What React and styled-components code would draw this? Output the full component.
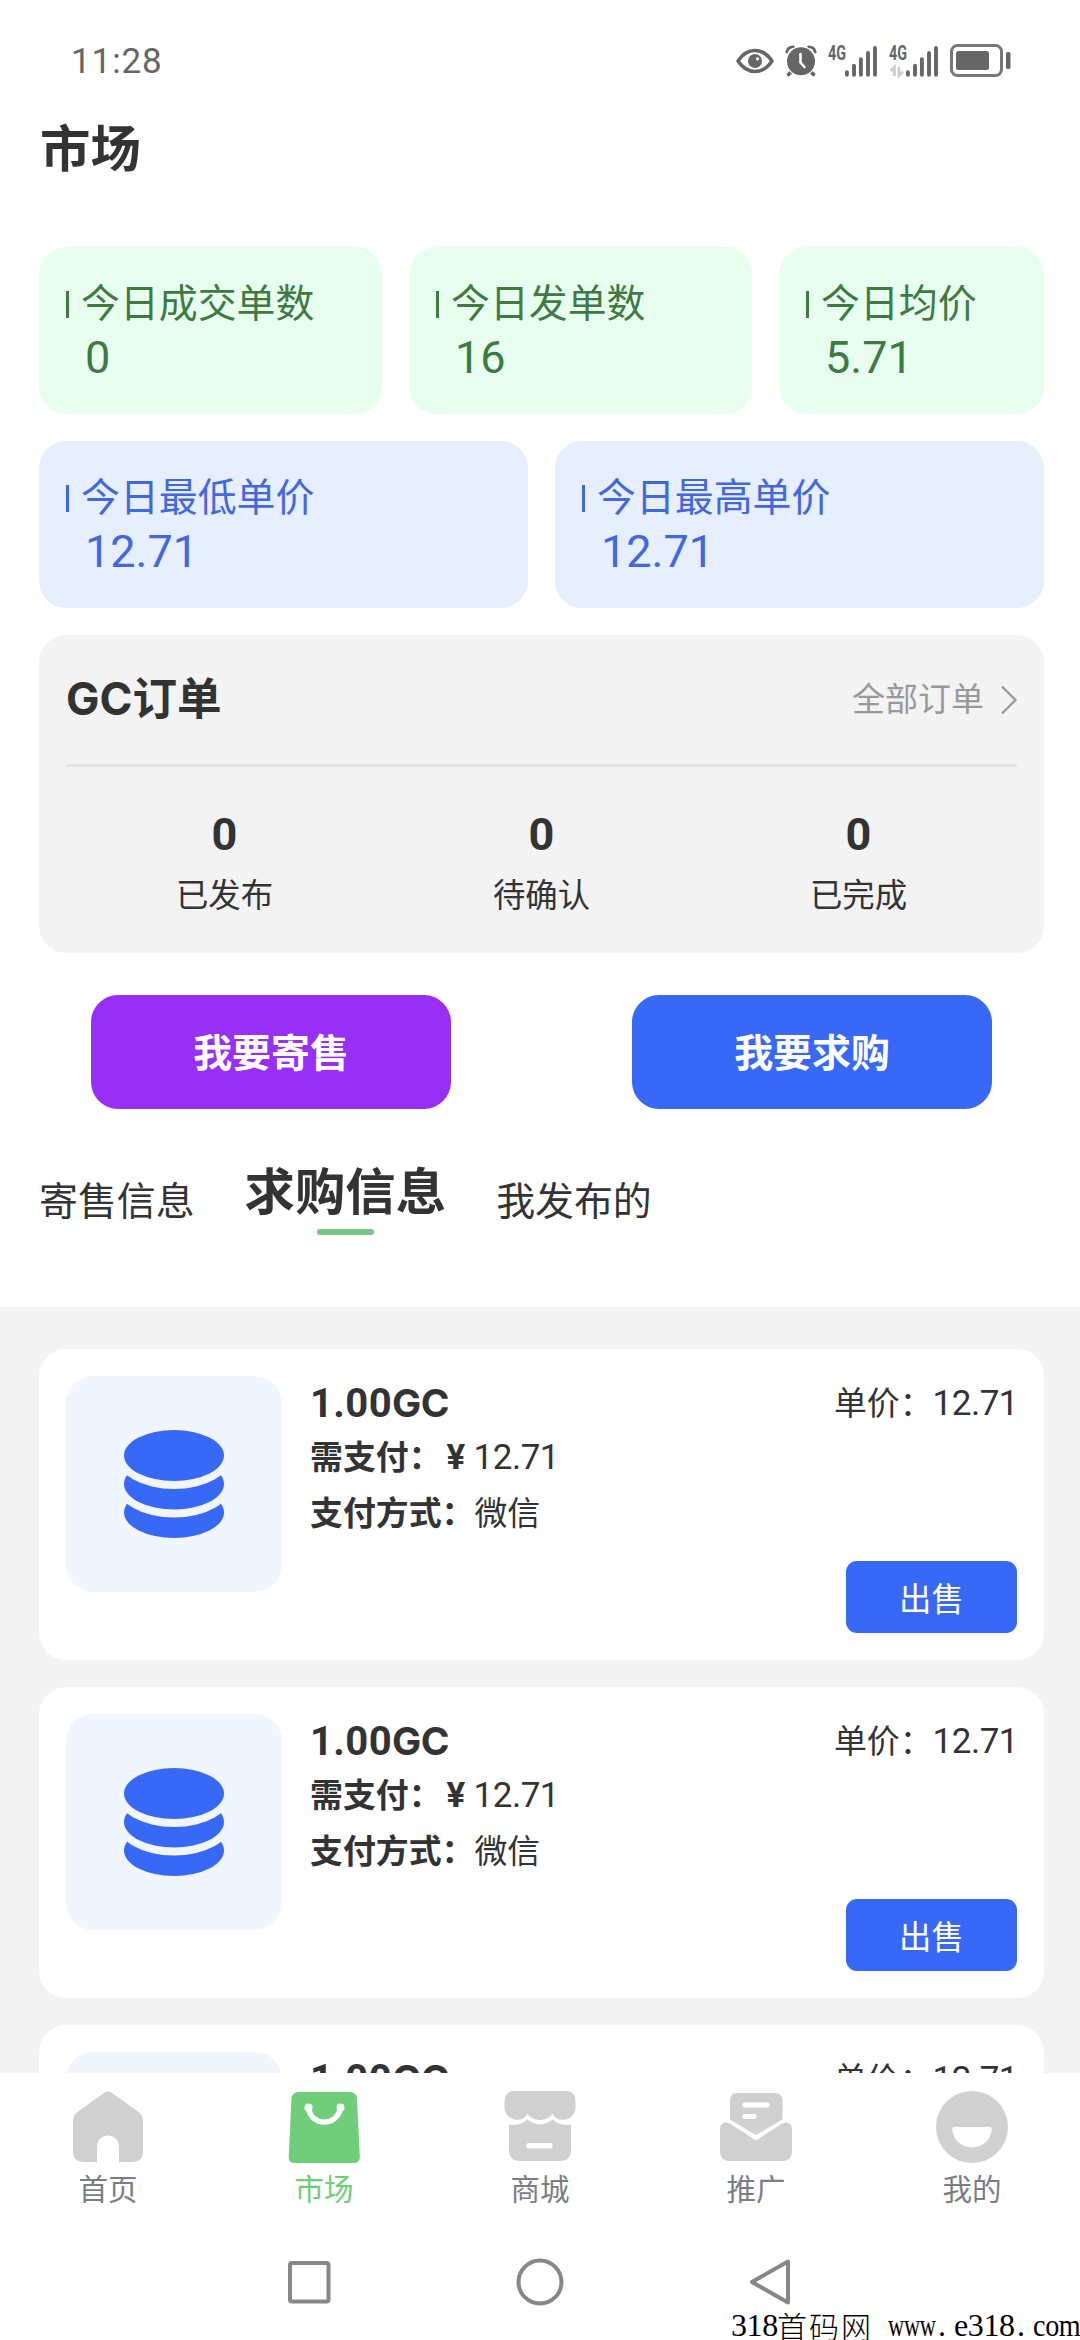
import React from 'react'
import styled, { createGlobalStyle } from 'styled-components'

const GlobalStyle = createGlobalStyle`
  * {
    box-sizing: border-box;
  }
  body {
    margin: 0;
    background: #fff;
    font-family: Roboto, "Noto Sans CJK SC", sans-serif;
    color: #333;
  }
`

const orderStates = [
  { count: 0, label: '已发布' },
  { count: 0, label: '待确认' },
  { count: 0, label: '已完成' },
]

const offers = [
  { id: 1, amount: '1.00', pay: '12.71', method: '微信', price: '12.71' },
  { id: 2, amount: '1.00', pay: '12.71', method: '微信', price: '12.71' },
  { id: 3, amount: '1.00', pay: '12.71', method: '微信', price: '12.71' },
]

/* ---------- icons ---------- */

const EyeIcon = () => (
  <svg width="38" height="26" viewBox="0 0 38 26">
    <path d="M2 13C7 5.500 12.500 2.500 19 2.500S31 5.500 36 13C31 20.500 25.500 23.500 19 23.500S7 20.500 2 13Z" fill="none" stroke="#666" strokeWidth="3.600" strokeLinejoin="round" />
    <circle cx="19" cy="13" r="7" fill="#666" />
    <circle cx="21.500" cy="10.800" r="1.600" fill="#fff" />
  </svg>
)

const AlarmIcon = () => (
  <svg width="32" height="32" viewBox="0 0 32 32">
    <path d="M7 26 3.500 29.500M25 26l3.500 3.500" stroke="#666" strokeWidth="3.600" strokeLinecap="round" />
    <path d="M1.800 7C2.500 3.500 5 1.700 8.500 1.800M30.200 7C29.500 3.500 27 1.700 23.500 1.800" fill="none" stroke="#666" strokeWidth="2.800" strokeLinecap="round" />
    <circle cx="16" cy="16.300" r="15.300" fill="#fff" />
    <circle cx="16" cy="16.300" r="14" fill="#666" />
    <path d="M15.500 9v8.500l4 4.500" fill="none" stroke="#fff" strokeWidth="2.600" strokeLinecap="round" />
  </svg>
)

const SignalIcon = ({ data }) => (
  <SignalSvg width="50" height="32" viewBox="0 0 50 32">
    <text x="0" y="15" fontFamily="Roboto" fontWeight="700" fontSize="20" fill="#666" textLength="18" lengthAdjust="spacingAndGlyphs">4G</text>
    {data && (
      <path d="M5.500 31V22L1.500 26M10 21.500V30.500L14 26.500" fill="none" stroke="#ccc" strokeWidth="2.600" />
    )}
    <path d="M18.900 27.200v2.600M26 20.800v9M32.900 14.200v15.600M40 8v21.800M47 3v26.800" stroke="#666" strokeWidth="3.900" strokeLinecap="round" />
  </SignalSvg>
)

const BatteryIcon = () => (
  <svg width="61" height="34" viewBox="0 0 61 34">
    <rect x="1.500" y="1.500" width="50" height="30" rx="6" fill="none" stroke="#777" strokeWidth="3" />
    <rect x="6" y="7" width="33" height="19" rx="2.500" fill="#666" />
    <rect x="56" y="8" width="4.500" height="17" rx="1.800" fill="#666" />
  </svg>
)

const ChevronIcon = () => (
  <svg width="18" height="30" viewBox="0 0 18 30">
    <path d="M2 1.500 15.500 15 2 28.500" fill="none" stroke="#999" strokeWidth="2.200" />
  </svg>
)

const CoinsIcon = () => (
  <svg width="100" height="108" viewBox="0 0 100 108">
    <ellipse cx="50" cy="82.500" rx="50" ry="25.500" fill="#3868f6" />
    <ellipse cx="50" cy="54" rx="58" ry="33.500" fill="#f1f6fe" />
    <ellipse cx="50" cy="54" rx="50" ry="25.500" fill="#3868f6" />
    <ellipse cx="50" cy="25.500" rx="58" ry="33.500" fill="#f1f6fe" />
    <ellipse cx="50" cy="25.500" rx="50" ry="25.500" fill="#3868f6" />
  </svg>
)

const HomeIcon = () => (
  <svg width="74" height="74" viewBox="0 0 74 74">
    <path d="M32.500 3.200Q37 0 41.500 3.200L67.500 22Q72 25.500 72 31V61Q72 72 61 72H48V56.500A11 11 0 0 0 26 56.500V72H13Q2 72 2 61V31Q2 25.500 6.500 22Z" fill="#d0d0d0" />
  </svg>
)

const BagIcon = () => (
  <svg width="74" height="74" viewBox="0 0 74 74">
    <path d="M12 2H63Q69.500 2 70 8.500L72.800 67Q72.800 73 67 73H7.500Q1.500 73 1.700 67L4.500 8.500Q5 2 12 2Z" fill="#70ce7a" />
    <path d="M21.500 17.500C24 37 50.500 37 53.500 17.500" fill="none" stroke="#fff" strokeWidth="5.400" />
    <circle cx="21.500" cy="17.500" r="4" fill="#fff" />
    <circle cx="53.500" cy="17.500" r="4" fill="#fff" />
  </svg>
)

const StoreIcon = () => (
  <svg width="74" height="74" viewBox="0 0 74 74">
    <path d="M11 1H63Q72.500 1 72.500 12V17C72.500 31 54.500 34 49.500 23.500C45 32 29 32 24.500 23.500C19.500 34 1.500 31 1.500 17V12Q1.500 1 11 1Z" fill="#d0d0d0" />
    <path d="M6 34.500Q17 36.500 24.500 29.500Q37 39.500 49.500 29.500Q57 36.500 68 34.500V60Q68 71 57 71H17Q6 71 6 60Z" fill="#d0d0d0" />
    <rect x="23.500" y="53" width="26" height="5.500" rx="2" fill="#fff" />
  </svg>
)

const PromoIcon = () => (
  <svg width="74" height="74" viewBox="0 0 74 74">
    <path d="M18 3H56Q63.500 3 63.500 11V29.500L37 45L11 29.500V11Q11 3 18 3Z" fill="#d0d0d0" />
    <path d="M1 40C1 32 7 31 11.500 34L37 50.500L62.500 34C67 31 73 32 73 40V62Q73 71 63 71H11Q1 71 1 62Z" fill="#d0d0d0" />
    <rect x="23.500" y="12.500" width="27" height="5" rx="1.800" fill="#fff" />
    <rect x="23.500" y="24" width="14" height="5" rx="1.800" fill="#fff" />
  </svg>
)

const MineIcon = () => (
  <svg width="74" height="74" viewBox="0 0 74 74">
    <circle cx="37" cy="37" r="36" fill="#d0d0d0" />
    <path d="M19 37H55Q56.700 37 56.700 39A19.700 18.500 0 0 1 17.300 39Q17.300 37 19 37Z" fill="#fff" />
  </svg>
)

const navItems = [
  { label: '首页', Icon: HomeIcon },
  { label: '市场', Icon: BagIcon, active: true },
  { label: '商城', Icon: StoreIcon },
  { label: '推广', Icon: PromoIcon },
  { label: '我的', Icon: MineIcon },
]

/* ---------- sections ---------- */

const StatCard = ({ tone, label, value }) => (
  <Stat $tone={tone}>
    <StatLabel>{label}</StatLabel>
    <StatValue>{value}</StatValue>
  </Stat>
)

const OfferCard = ({ offer }) => (
  <Offer>
    <Thumb><CoinsIcon /></Thumb>
    <OfferInfo>
      <Amount>{offer.amount}<Unit>GC</Unit></Amount>
      <InfoLine><b>需支付：</b><Yen>¥</Yen><Num>{offer.pay}</Num></InfoLine>
      <InfoLine><b>支付方式：</b>{offer.method}</InfoLine>
    </OfferInfo>
    <OfferSide>
      <Price>单价：<Num>{offer.price}</Num></Price>
      <SellButton>出售</SellButton>
    </OfferSide>
  </Offer>
)

const App = () => {
  return (
    <Screen>
      <GlobalStyle />
      <StatusBar>
        <Clock>11:28</Clock>
        <StatusIcons>
          <EyeIcon />
          <AlarmIcon />
          <SignalIcon />
          <SignalIcon data />
          <BatteryIcon />
        </StatusIcons>
      </StatusBar>

      <Title>市场</Title>

      <Content>
        <StatRow $columns="343px 343px 1fr">
          <StatCard tone="green" label="今日成交单数" value="0" />
          <StatCard tone="green" label="今日发单数" value="16" />
          <StatCard tone="green" label="今日均价" value="5.71" />
        </StatRow>
        <StatRow $columns="1fr 1fr">
          <StatCard tone="blue" label="今日最低单价" value="12.71" />
          <StatCard tone="blue" label="今日最高单价" value="12.71" />
        </StatRow>

        <Orders>
          <OrdersHead>
            <OrdersTitle><Unit>GC</Unit>订单</OrdersTitle>
            <AllOrders>全部订单<ChevronIcon /></AllOrders>
          </OrdersHead>
          <OrderStates>
            {orderStates.map((item) => (
              <OrderState key={item.label}>
                <strong>{item.count}</strong>
                <span>{item.label}</span>
              </OrderState>
            ))}
          </OrderStates>
        </Orders>

        <Actions>
          <ActionButton $bg="#982ff6">我要寄售</ActionButton>
          <ActionButton $bg="#3868f6">我要求购</ActionButton>
        </Actions>

        <Tabs>
          <Tab>寄售信息</Tab>
          <Tab $active>求购信息</Tab>
          <Tab>我发布的</Tab>
        </Tabs>
      </Content>

      <OfferList>
        {offers.map((offer) => <OfferCard key={offer.id} offer={offer} />)}
      </OfferList>

      <TabBar>
        {navItems.map(({ label, Icon, active }) => (
          <TabBarItem key={label} $active={active}>
            <Icon />
            <span>{label}</span>
          </TabBarItem>
        ))}
      </TabBar>

      <SystemNav>
        <svg width="50" height="50" viewBox="0 0 50 50">
          <rect x="6" y="6" width="38.500" height="38.500" rx="2" fill="none" stroke="#878787" strokeWidth="4" />
        </svg>
        <svg width="50" height="50" viewBox="0 0 50 50">
          <circle cx="25" cy="25" r="21.500" fill="none" stroke="#878787" strokeWidth="4" />
        </svg>
        <svg width="50" height="50" viewBox="0 0 50 50">
          <path d="M42 4.500V45.500L6 25Z" fill="none" stroke="#878787" strokeWidth="4" strokeLinejoin="round" />
        </svg>
      </SystemNav>

      <Watermark>
        <Mark $w={46}>318</Mark>
        <MarkHan>首码网</MarkHan>
        <Mark $w={50} $squeeze={0.7}>www</Mark>
        <Mark $w={16}>.</Mark>
        <Mark $w={63}>e318</Mark>
        <Mark $w={16}>.</Mark>
        <Mark $w={47} $squeeze={0.88}>com</Mark>
      </Watermark>
    </Screen>
  )
}

const Screen = styled.div`
  position: relative;
  display: flex;
  flex-direction: column;
  width: 1080px;
  height: 2340px;
  overflow: hidden;
  background: #fff;
`

const StatusBar = styled.header`
  display: flex;
  justify-content: space-between;
  align-items: center;
  height: 82px;
  padding: 40px 69px 0 71px;
`

const Clock = styled.span`
  padding-top: 2px;
  font-size: 35px;
  line-height: 42px;
  letter-spacing: 0.9px;
  color: #666;
`

const StatusIcons = styled.div`
  display: flex;
  align-items: center;

  svg {
    flex: none;
    margin-left: 11px;
  }
  svg:first-child {
    margin-left: 0;
  }
`

const SignalSvg = styled.svg`
  overflow: visible;
`

const Title = styled.h1`
  height: 165px;
  margin: 0;
  padding: 38px 39px 0 40px;
  font-size: 50.4px;
  line-height: 60px;
`

const Content = styled.main`
  display: flex;
  flex-direction: column;
  flex: none;
  height: 1060px;
  padding: 0 36px 0 39px;
`

const StatRow = styled.div`
  display: grid;
  grid-template-columns: ${(p) => p.$columns};
  gap: 27px;
  margin-bottom: 27px;
`

const tones = {
  green: { bg: '#e8ffef', text: '#3f7a43' },
  blue: { bg: '#e7eefe', text: '#4168e0' },
}

const Stat = styled.div`
  height: 167px;
  padding: 34px 0 0 27px;
  border-radius: 27px;
  background: ${(p) => tones[p.$tone].bg};
  color: ${(p) => tones[p.$tone].text};
`

const StatLabel = styled.div`
  display: flex;
  align-items: center;
  font-size: 38.9px;
  line-height: 46px;

  &::before {
    content: '';
    width: 3px;
    height: 27px;
    margin-right: 12px;
    background: currentColor;
  }
`

const StatValue = styled.div`
  padding: 6px 0 0 19px;
  font-size: 45px;
  line-height: 50px;
`

const Orders = styled.section`
  height: 318px;
  padding: 0 27px;
  border-radius: 27px;
  background: #f3f3f3;
`

const OrdersHead = styled.div`
  display: flex;
  justify-content: space-between;
  align-items: center;
  height: 132px;
  border-bottom: 3px solid #e3e3e3;
`

const Unit = styled.span`
  font-family: Inter, sans-serif;
`

const OrdersTitle = styled.h2`
  margin: 0;
  font-size: 44.6px;
  line-height: 56px;
`

const AllOrders = styled.div`
  display: flex;
  align-items: center;
  gap: 16px;
  margin-right: -1px;
  font-size: 33px;
  line-height: 44px;
  color: #999;
`

const OrderStates = styled.div`
  display: grid;
  grid-template-columns: repeat(3, 1fr);
  padding-top: 43px;
`

const OrderState = styled.div`
  display: flex;
  flex-direction: column;
  align-items: center;

  strong {
    font-size: 45px;
    line-height: 50px;
  }
  span {
    margin-top: 14px;
    font-size: 32.4px;
    line-height: 44px;
  }
`

const Actions = styled.div`
  display: flex;
  justify-content: space-between;
  margin-top: 42px;
  padding: 0 52px;
`

const ActionButton = styled.button`
  width: 360px;
  height: 114px;
  padding: 0 0 4px;
  border: 0;
  border-radius: 27px;
  background: ${(p) => p.$bg};
  color: #fff;
  font: 700 38.9px Roboto, "Noto Sans CJK SC", sans-serif;
`

const Tabs = styled.nav`
  display: flex;
  align-items: flex-start;
  gap: 50px;
  margin-top: 52px;
`

const Tab = styled.a`
  display: flex;
  flex-direction: column;
  align-items: center;
  padding-top: ${(p) => (p.$active ? 0 : '9px')};
  font-size: ${(p) => (p.$active ? '50.4px' : '38.9px')};
  font-weight: ${(p) => (p.$active ? 700 : 400)};
  line-height: 64px;

  &::after {
    content: '';
    width: 57px;
    height: 6px;
    margin-top: 4px;
    border-radius: 3px;
    background: ${(p) => (p.$active ? '#78c784' : 'transparent')};
  }
`

const OfferList = styled.section`
  display: flex;
  flex-direction: column;
  gap: 27px;
  height: 766px;
  padding: 42px 36px 0 39px;
  overflow: hidden;
  background: #f3f3f3;
`

const Offer = styled.article`
  display: flex;
  flex: none;
  height: 311px;
  padding: 27px;
  border-radius: 27px;
  background: #fff;
`

const Thumb = styled.div`
  display: flex;
  align-items: center;
  justify-content: center;
  width: 216px;
  height: 216px;
  border-radius: 27px;
  background: #f1f6fe;
`

const OfferInfo = styled.div`
  flex: 1;
  padding-left: 28px;
`

const Amount = styled.div`
  font-size: 40px;
  font-weight: 700;
  line-height: 54px;
  letter-spacing: 0.4px;

  ${Unit} {
    font-size: 38.9px;
    letter-spacing: -0.5px;
  }
`

const InfoLine = styled.div`
  display: flex;
  align-items: baseline;
  height: 56px;
  font-size: 32.9px;
  line-height: 53px;
  white-space: nowrap;
`

const Yen = styled.b`
  width: 32px;
  padding-left: 5px;
  font-size: 35px;
`

const Num = styled.span`
  font-size: 35px;
  letter-spacing: -0.5px;
`

const OfferSide = styled.div`
  display: flex;
  flex-direction: column;
  justify-content: space-between;
  align-items: flex-end;
`

const Price = styled.div`
  margin-right: -1px;
  font-size: 32.9px;
  line-height: 55px;
`

const SellButton = styled.button`
  width: 171px;
  height: 72px;
  padding: 0 0 2px;
  border: 0;
  border-radius: 11px;
  background: #3868f6;
  color: #fff;
  font: 400 32.4px Roboto, "Noto Sans CJK SC", sans-serif;
`

const TabBar = styled.nav`
  display: grid;
  grid-template-columns: repeat(5, 1fr);
  height: 151px;
  background: #fff;
`

const TabBarItem = styled.a`
  display: flex;
  flex-direction: column;
  align-items: center;
  padding-top: 17px;
  font-size: 29.5px;
  line-height: 40px;
  color: ${(p) => (p.$active ? '#70ce7a' : '#7a7e83')};

  span {
    margin-top: 6px;
  }
`

const SystemNav = styled.footer`
  display: flex;
  justify-content: center;
  gap: 181px;
  padding-top: 33px;
  height: 116px;
`

const Watermark = styled.div`
  position: absolute;
  right: 0;
  bottom: 0;
  display: flex;
  align-items: center;
  height: 30px;
  color: #000;
  white-space: nowrap;
`

const Mark = styled.span`
  width: ${(p) => p.$w}px;
  font-family: "Liberation Serif", serif;
  font-size: 32px;
  line-height: 30px;
  letter-spacing: -0.4px;
  transform: scaleX(${(p) => p.$squeeze || 1});
  transform-origin: left;
`

const MarkHan = styled.span`
  width: 111px;
  font-family: "Noto Sans CJK SC", sans-serif;
  font-weight: 300;
  font-size: 30px;
  line-height: 30px;
  letter-spacing: 2px;
`

export default App
